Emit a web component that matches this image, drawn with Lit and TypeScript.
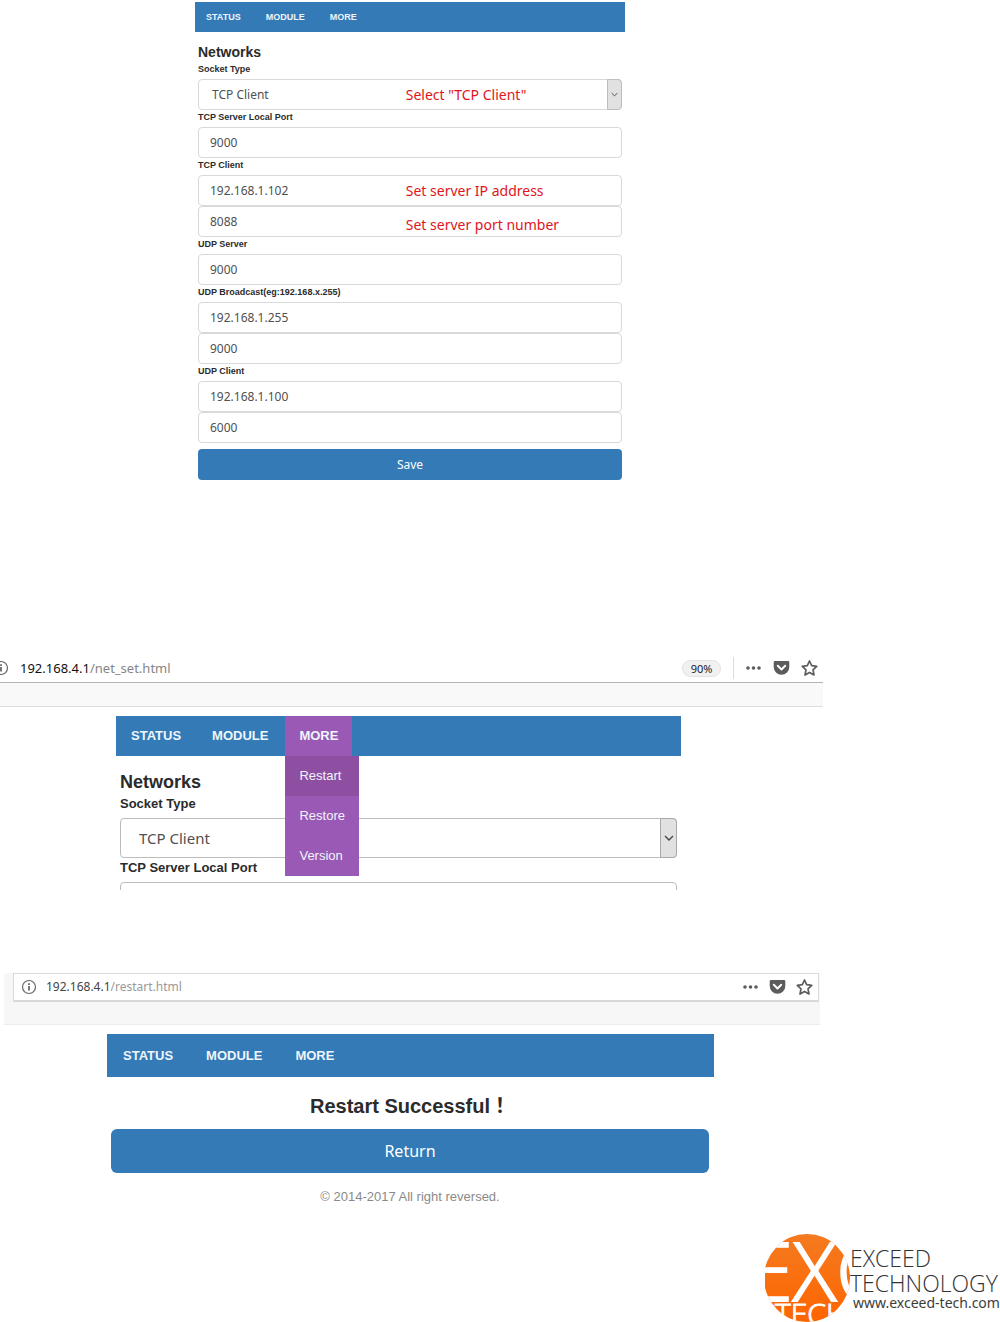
import { LitElement, html, svg, css, nothing } from "lit";
import { customElement, property } from "lit/decorators.js";

const chevron = html`<svg class="chevron" viewBox="0 0 10 6" aria-hidden="true">
  <path d="M1 1l4 4 4-4" fill="none" stroke="#444" stroke-width="1.3" />
</svg>`;

/** Address bar of the browser window, with page actions on the right. */
@customElement("address-bar")
export class AddressBar extends LitElement {
  @property() host = "";
  @property() path = "";
  @property() zoom = "";
  @property({ type: Boolean, reflect: true }) boxed = false;

  static styles = css`
    :host {
      display: block;
      overflow: hidden;
      font-family: "Noto Sans", "Open Sans", sans-serif;
      background: #f9f9f9;
      border-bottom: 1px solid #dcdcdc;
    }
    .bar {
      display: flex;
      align-items: center;
      height: 28px;
      padding-right: 5px;
      background: #fff;
      border-bottom: 1px solid #b4b4b4;
    }
    .strip {
      height: 23px;
    }
    .info {
      flex: none;
      width: 16px;
      height: 16px;
      margin-left: -7px;
    }
    .url {
      flex: 1;
      margin-left: 11px;
      font-size: 13px;
      line-height: 20px;
      color: #858585;
    }
    .url b {
      font-weight: 400;
      color: #111;
    }
    .zoom {
      box-sizing: border-box;
      width: 39px;
      height: 17px;
      border: 1px solid #e2e2e2;
      border-radius: 9px;
      background: #f1f1f1;
      font-size: 11px;
      line-height: 15px;
      text-align: center;
      color: #222;
    }
    .rule {
      width: 1px;
      height: 22px;
      margin: 0 11px 0 12px;
      background: #dcdcdc;
    }
    .actions {
      display: flex;
      gap: 11px;
    }
    button {
      display: block;
      padding: 0;
      border: 0;
      background: none;
    }
    button svg {
      display: block;
      width: 17px;
      height: 17px;
    }
    :host([boxed]) {
      padding: 0 1px 0 9px;
      background: #f7f7f7;
      border-color: #ececec;
    }
    :host([boxed]) .bar {
      height: 26px;
      border: 1px solid #dadada;
      border-bottom: 2px solid #d8d8d8;
    }
    :host([boxed]) .strip {
      height: 22px;
    }
    :host([boxed]) .info {
      margin-left: 7px;
    }
    :host([boxed]) .url {
      margin-left: 9px;
      font-size: 12px;
      color: #999;
    }
    :host([boxed]) .url b {
      color: #444;
    }
    :host([boxed]) .actions {
      gap: 10px;
    }
  `;

  render() {
    return html`
      <div class="bar">
        <svg class="info" viewBox="0 0 16 16" aria-hidden="true">
          <circle cx="8" cy="8" r="6.5" fill="none" stroke="#666" stroke-width="1.2" />
          <path d="M8 7v4.5M8 4.3v1.6" stroke="#555" stroke-width="1.6" />
        </svg>
        <span class="url"><b>${this.host}</b>${this.path}</span>
        ${this.zoom
          ? html`<span class="zoom">${this.zoom}</span><span class="rule"></span>`
          : nothing}
        <div class="actions">
          <button aria-label="Page actions">
            <svg viewBox="0 0 17 17">
              <g fill="#5c5c5c">
                <circle cx="3" cy="8" r="1.8" />
                <circle cx="8.5" cy="8" r="1.8" />
                <circle cx="14" cy="8" r="1.8" />
              </g>
            </svg>
          </button>
          <button aria-label="Save to Pocket">
            <svg viewBox="0 0 17 17">
              <path
                d="M2 1h13a1.300 1.300 0 0 1 1.300 1.300V7a7.800 7.800 0 0 1-15.600 0V2.300A1.300 1.300 0 0 1 2 1z"
                fill="#5c5c5c"
              />
              <path
                d="M4.800 5.800l3.700 3.700 3.700-3.700"
                fill="none"
                stroke="#fff"
                stroke-width="2"
                stroke-linecap="round"
                stroke-linejoin="round"
              />
            </svg>
          </button>
          <button aria-label="Bookmark this page">
            <svg viewBox="0 0 17 17">
              <path
                d="M8.500 1l2.200 4.700 5 .6-3.700 3.500 1 5.200-4.500-2.600L4 15l1-5.200L1.300 6.300l5-.6z"
                fill="none"
                stroke="#5c5c5c"
                stroke-width="1.700"
                stroke-linejoin="round"
              />
            </svg>
          </button>
        </div>
      </div>
      <div class="strip"></div>
    `;
  }
}

/** Blue navigation bar of the module's web pages. */
@customElement("nav-bar")
export class NavBar extends LitElement {
  @property({ reflect: true }) size = "small";
  @property({ type: Boolean }) open = false;

  static styles = css`
    :host {
      display: block;
      font-family: "Liberation Sans", Arial, sans-serif;
    }
    nav {
      display: flex;
      background: #337ab7;
      font-size: 13px;
      font-weight: 700;
      line-height: 40px;
    }
    a {
      display: block;
      color: #eef5fb;
      text-decoration: none;
    }
    .item {
      position: relative;
    }
    :host([size="small"]) nav {
      padding-left: 11px;
      gap: 25px;
      font-size: 9px;
      line-height: 30px;
    }
    :host([size="medium"]) nav {
      padding-left: 1px;
      gap: 3px;
    }
    :host([size="medium"]) a {
      padding: 0 14px;
    }
    :host([size="large"]) nav {
      padding-left: 16px;
      gap: 33px;
      line-height: 43px;
    }
    .open > a {
      background: #9b59b6;
    }
    .menu {
      position: absolute;
      z-index: 1;
      top: 100%;
      left: 0;
      margin: 0;
      padding: 0;
      list-style: none;
      font-weight: 400;
      background: #9b59b6;
    }
    .menu li:first-child {
      background: #8e4fa3;
    }
  `;

  render() {
    return html`
      <nav>
        <div class="item"><a href="#status">STATUS</a></div>
        <div class="item"><a href="#module">MODULE</a></div>
        <div class="item ${this.open ? "open" : ""}">
          <a href="#more">MORE</a>
          ${this.open
            ? html`<ul class="menu">
                ${["Restart", "Restore", "Version"].map(
                  (name) => html`<li><a href="#${name.toLowerCase()}">${name}</a></li>`
                )}
              </ul>`
            : nothing}
        </div>
      </nav>
    `;
  }
}

interface Field {
  label: string;
  values: string[];
  notes?: string[];
}

const fields: Field[] = [
  { label: "TCP Server Local Port", values: ["9000"] },
  {
    label: "TCP Client",
    values: ["192.168.1.102", "8088"],
    notes: ["Set server IP address", "Set server port number"],
  },
  { label: "UDP Server", values: ["9000"] },
  { label: "UDP Broadcast(eg:192.168.x.255)", values: ["192.168.1.255", "9000"] },
  { label: "UDP Client", values: ["192.168.1.100", "6000"] },
];

/** Networks form: the full one, or its cut-off beginning when brief. */
@customElement("network-form")
export class NetworkForm extends LitElement {
  @property({ type: Boolean, reflect: true }) brief = false;

  static styles = css`
    :host {
      display: block;
      padding: 10px 3px 0;
      font-family: "Liberation Sans", Arial, sans-serif;
      color: #2b2b2b;
    }
    h2 {
      margin: 0;
      font-size: 14px;
      line-height: 20px;
    }
    label {
      display: block;
      padding-bottom: 3px;
      font-size: 9px;
      font-weight: 700;
      line-height: 14px;
    }
    .control {
      position: relative;
    }
    input,
    select {
      display: block;
      box-sizing: border-box;
      width: 100%;
      height: 31px;
      margin: 0;
      padding: 0 11px;
      border: 1px solid #d9d9d9;
      border-radius: 4px;
      background: #fff;
      font-family: "Noto Sans", "Open Sans", sans-serif;
      font-size: 12px;
      color: #505050;
    }
    select {
      appearance: none;
      padding: 0 13px;
    }
    .arrow {
      position: absolute;
      top: 0;
      right: 0;
      bottom: 0;
      box-sizing: border-box;
      width: 15px;
      display: grid;
      place-items: center;
      border: 1px solid #bdbdbd;
      border-radius: 0 4px 4px 0;
      background: #e1e1e1;
      pointer-events: none;
    }
    .chevron {
      width: 7px;
      height: 5px;
    }
    .note {
      position: absolute;
      top: 50%;
      left: 49%;
      transform: translateY(-50%);
      font-family: "Noto Sans", "Open Sans", sans-serif;
      font-size: 14px;
      line-height: 20px;
      color: #e0141c;
      white-space: nowrap;
    }
    .control + .control .note {
      top: 60%;
    }
    .save {
      display: block;
      width: 100%;
      height: 31px;
      margin-top: 6px;
      border: 0;
      border-radius: 4px;
      background: #337ab7;
      font-family: "Noto Sans", "Open Sans", sans-serif;
      font-size: 12px;
      color: #fff;
    }
    :host([brief]) {
      padding: 14px 4px 0;
    }
    :host([brief]) h2 {
      font-size: 18px;
      line-height: 24px;
    }
    :host([brief]) label {
      padding-bottom: 4px;
      font-size: 13px;
      line-height: 20px;
    }
    :host([brief]) select,
    :host([brief]) input {
      height: 40px;
      border-color: #bcbcbc;
      font-size: 15px;
    }
    :host([brief]) select {
      padding: 0 18px;
    }
    :host([brief]) .arrow {
      width: 17px;
      border-color: #a8a8a8;
    }
    :host([brief]) .chevron {
      width: 10px;
      height: 6px;
    }
    .cut {
      height: 8px;
      overflow: hidden;
    }
  `;

  render() {
    return html`
      <h2>Networks</h2>
      <label for="type">Socket Type</label>
      <div class="control">
        <select id="type">
          <option>TCP Client</option>
        </select>
        <span class="arrow">${chevron}</span>
        ${this.brief ? nothing : html`<span class="note">Select "TCP Client"</span>`}
      </div>
      ${this.brief
        ? html`<label for="port">${fields[0].label}</label>
            <div class="cut"><input id="port" /></div>`
        : html`
            ${fields.map(
              (field, i) => html`
                <label for="field-${i}-0">${field.label}</label>
                ${field.values.map(
                  (value, j) => html`<div class="control">
                    <input id="field-${i}-${j}" aria-label=${field.label} .value=${value} />
                    ${field.notes
                      ? html`<span class="note">${field.notes[j]}</span>`
                      : nothing}
                  </div>`
                )}
              `
            )}
            <button class="save">Save</button>
          `}
    `;
  }
}

const disc = svg`
  <defs>
    <clipPath id="disc"><ellipse cx="42" cy="44" rx="43" ry="44" /></clipPath>
    <linearGradient id="glow" x1="0" y1="0" x2="0" y2="1">
      <stop offset="0" stop-color="#f47a20" />
      <stop offset="1" stop-color="#ff6500" />
    </linearGradient>
  </defs>
  <g clip-path="url(#disc)">
    <rect width="85" height="88" fill="url(#glow)" />
    <g fill="#fff" stroke="#fff">
      <text x="-17" y="67" font-size="81" stroke-width="2">EXC</text>
      <text x="10" y="91" font-size="30" stroke-width="1">TECH</text>
    </g>
  </g>`;

@customElement("app-root")
export class AppRoot extends LitElement {
  static styles = css`
    :host {
      display: block;
      background: #fff;
      font-family: "Liberation Sans", Arial, sans-serif;
    }
    .shot {
      display: grid;
    }
    .settings {
      grid-template-columns: 195fr 430fr 375fr;
      padding-top: 2px;
    }
    .settings > *,
    .page > * {
      grid-column: 2;
      min-width: 0;
    }
    .menu {
      grid-template-columns: 823fr 177fr;
      margin-top: 174px;
    }
    .menu > * {
      grid-column: 1;
    }
    .menu .page {
      display: grid;
      grid-template-columns: 116fr 565fr 142fr;
      padding-top: 9px;
    }
    .restart {
      grid-template-columns: 4fr 816fr 180fr;
      margin-top: 83px;
    }
    .restart > * {
      grid-column: 2;
    }
    .restart .page {
      display: grid;
      grid-template-columns: 103fr 607fr 106fr;
      padding-top: 9px;
    }
    .result {
      padding: 15px 5px 0 4px;
      text-align: center;
    }
    h1 {
      margin: 0;
      font-family: "Liberation Sans", "Noto Sans CJK TC", sans-serif;
      font-size: 20px;
      line-height: 28px;
      color: #2b2b2b;
    }
    .return {
      display: block;
      width: 100%;
      height: 44px;
      margin-top: 9px;
      border: 0;
      border-radius: 6px;
      background: #337ab7;
      font-family: "Noto Sans", "Open Sans", sans-serif;
      font-size: 16px;
      color: #fff;
    }
    .legal {
      margin: 14px 0 0;
      font-size: 13px;
      line-height: 20px;
      color: #8a8a8a;
    }
    .brand {
      display: flex;
      justify-content: flex-end;
      margin-top: 27px;
    }
    .brand svg {
      width: 85px;
      height: 88px;
      font-family: "Open Sans", sans-serif;
      font-weight: 300;
    }
    .words {
      width: 150px;
      padding-top: 12px;
      font-family: "Open Sans", sans-serif;
      font-weight: 300;
      font-size: 23px;
      line-height: 25px;
      color: #333;
      white-space: nowrap;
    }
    .site {
      display: block;
      padding-left: 3px;
      font-family: "Noto Sans", sans-serif;
      font-weight: 400;
      font-size: 14px;
      line-height: 14px;
      color: #3c3c3c;
      text-decoration: none;
    }
  `;

  render() {
    return html`
      <section class="shot settings">
        <nav-bar size="small"></nav-bar>
        <network-form></network-form>
      </section>

      <section class="shot menu">
        <address-bar host="192.168.4.1" path="/net_set.html" zoom="90%"></address-bar>
        <div class="page">
          <nav-bar size="medium" open></nav-bar>
          <network-form brief></network-form>
        </div>
      </section>

      <section class="shot restart">
        <address-bar boxed host="192.168.4.1" path="/restart.html"></address-bar>
        <div class="page">
          <nav-bar size="large"></nav-bar>
          <div class="result">
            <h1>Restart Successful！</h1>
            <button class="return">Return</button>
            <p class="legal">© 2014-2017 All right reversed.</p>
          </div>
        </div>
      </section>

      <footer class="brand">
        <svg viewBox="0 0 85 88" role="img" aria-label="Exceed Technology">${disc}</svg>
        <div class="words">
          <div>EXCEED</div>
          <div>TECHNOLOGY</div>
          <a class="site" href="#site">www.exceed-tech.com</a>
        </div>
      </footer>
    `;
  }
}
